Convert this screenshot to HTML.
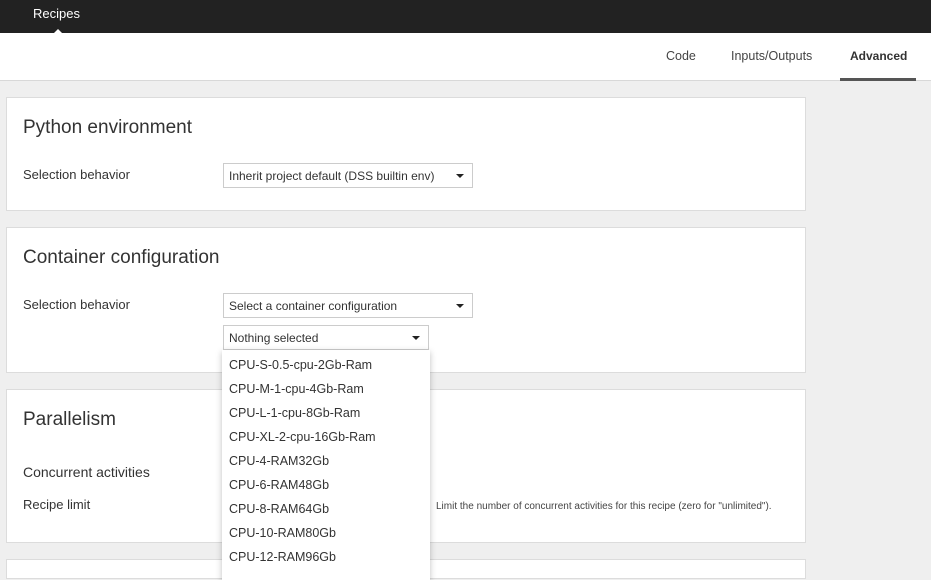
<!DOCTYPE html><html><head><style>
*{box-sizing:border-box;margin:0;padding:0}
body{width:931px;height:568px;overflow:hidden;background:#efefef;font-family:"Liberation Sans",sans-serif;color:#333;position:relative}
.top{position:absolute;left:0;top:0;width:931px;height:33px;background:#222}
.top span{position:absolute;left:33px;top:6px;color:#fff;font-size:13px}
.top i{position:absolute;left:54px;top:29px;border:4px solid transparent;border-bottom-color:#fff;border-top:0}
.nav{position:absolute;left:0;top:33px;width:931px;height:48px;background:#fff;border-bottom:1px solid #d8d8d8}
.nav span{position:absolute;top:16px;font-size:12.5px;color:#444}
.nav .act{font-weight:bold;color:#333;font-size:12px}
.ul{position:absolute;left:840px;top:45px;width:76px;height:3px;background:#555}
.p{position:absolute;left:6px;width:800px;background:#fff;border:1px solid #dcdcdc}
.h{position:absolute;left:16px;font-size:19px;color:#333}
.l{position:absolute;left:16px;font-size:13px;color:#333}
.sel{position:absolute;left:216px;height:25px;border:1px solid #ccc;background:#fff;font-size:12px;padding:5px 0 0 5px;color:#333}
.sel:after{content:"";position:absolute;right:8px;top:10px;border:4px solid transparent;border-top:4px solid #222;border-bottom:0}
.dd{position:absolute;left:222px;top:350px;width:208px;height:230px;background:#fff;box-shadow:0 2px 6px rgba(0,0,0,.25)}
.dd div{height:24px;font-size:12.5px;padding:8px 0 0 7px;color:#333}
</style></head><body>
<div class="top"><span>Recipes</span><i></i></div>
<div class="nav"><span style="left:666px">Code</span><span style="left:731px">Inputs/Outputs</span><span class="act" style="left:850px">Advanced</span><div class="ul"></div></div>
<div class="p" style="top:97px;height:114px"><div class="h" style="top:19px">Python environment</div><div class="l" style="top:69px">Selection behavior</div><div class="sel" style="top:65px;width:250px">Inherit project default (DSS builtin env)</div></div>
<div class="p" style="top:227px;height:146px"><div class="h" style="top:19px">Container configuration</div><div class="l" style="top:69px">Selection behavior</div><div class="sel" style="top:65px;width:250px">Select a container configuration</div><div class="sel" style="top:97px;width:206px">Nothing selected</div></div>
<div class="p" style="top:389px;height:154px"><div class="h" style="top:19px">Parallelism</div><div class="l" style="top:74px;font-size:14px">Concurrent activities</div><div class="l" style="top:107px">Recipe limit</div><div style="position:absolute;left:429px;top:111px;font-size:10px;color:#444">Limit the number of concurrent activities for this recipe (zero for "unlimited").</div></div>
<div class="p" style="top:559px;height:20px"></div>
<div class="dd"><div>CPU-S-0.5-cpu-2Gb-Ram</div><div>CPU-M-1-cpu-4Gb-Ram</div><div>CPU-L-1-cpu-8Gb-Ram</div><div>CPU-XL-2-cpu-16Gb-Ram</div><div>CPU-4-RAM32Gb</div><div>CPU-6-RAM48Gb</div><div>CPU-8-RAM64Gb</div><div>CPU-10-RAM80Gb</div><div>CPU-12-RAM96Gb</div></div>
</body></html>
